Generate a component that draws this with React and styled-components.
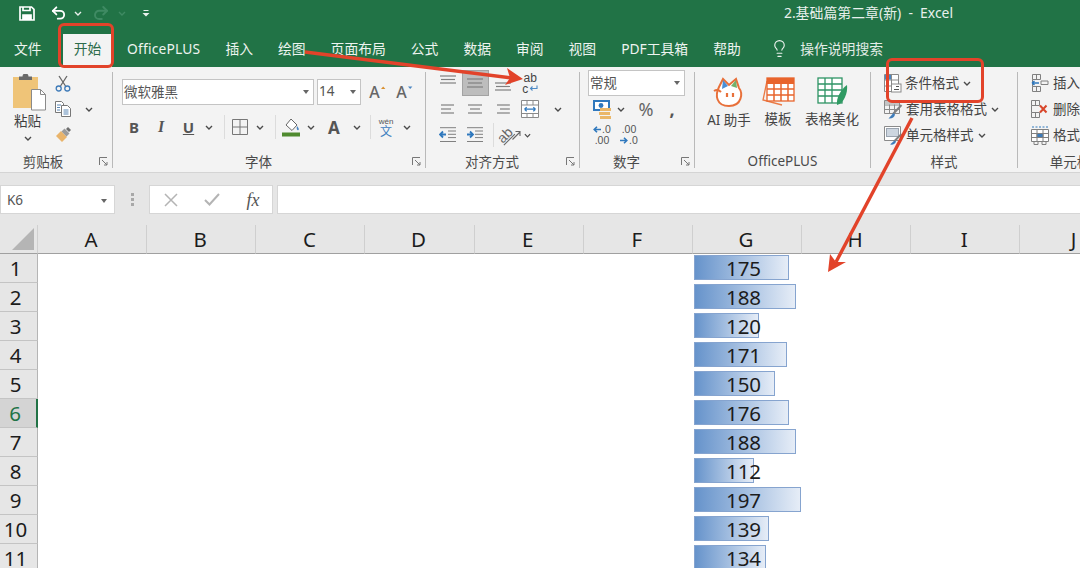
import React from "react";
import styled, { createGlobalStyle } from "styled-components";
import { Undo2, Redo2, Lightbulb } from "lucide-react";

const GREEN = "#217346";
const RED = "#e2432a";
const UI_FONT = `"Noto Sans", "Noto Sans CJK SC", sans-serif`;
const SMALL_FONT = `"Liberation Sans", "Noto Sans CJK SC", sans-serif`;

const GlobalStyle = createGlobalStyle`
	html, body {
		margin: 0;
		padding: 0;
		width: 1080px;
		height: 568px;
		overflow: hidden;
		background: #ffffff;
	}
	* {
		box-sizing: border-box;
	}
`;

const Window = styled.div`
	position: relative;
	width: 1080px;
	height: 568px;
	overflow: hidden;
	font-family: ${UI_FONT};
	background: #ffffff;
`;

const TitleBar = styled.div`
	display: flex;
	align-items: center;
	height: 34px;
	padding-left: 19px;
	background: ${GREEN};
	color: #e8f0ec;
`;

const QuickSlot = styled.span`
	display: flex;
	align-items: center;
	justify-content: center;
	flex: none;
	width: ${(props) => props.$w}px;
	height: 20px;
	margin-top: -8px;
`;

const DocTitle = styled.div`
	margin-left: auto;
	padding-right: 127px;
	margin-top: -11px;
	font-size: 13.9px;
	white-space: pre;
`;

const TabBar = styled.div`
	display: flex;
	align-items: stretch;
	height: 33px;
	padding-left: 1.5px;
	background: ${GREEN};
	color: #eef4f0;
	font-size: 13.8px;
`;

const Tab = styled.div`
	display: flex;
	align-items: center;
	flex: none;
	padding: 0 ${(props) => (props.$active ? 10.7 : 12.5)}px 5px;
	margin: ${(props) => (props.$active ? "0 2.5px 0 9px" : "0")};
	letter-spacing: ${(props) => (props.$latin ? 0.2 : 0)}px;
	background: ${(props) => (props.$active ? "#f3f3f3" : "transparent")};
	color: ${(props) => (props.$active ? "#2c6b4b" : "inherit")};
	white-space: nowrap;
`;

const SearchTab = styled.div`
	display: flex;
	align-items: center;
	gap: 11px;
	margin-left: 17px;
	padding-bottom: 5px;
	color: #e3ece7;
`;

const Ribbon = styled.div`
	display: flex;
	height: 106px;
	background: #f3f3f3;
	border-bottom: 1px solid #d4d4d4;
	color: #444444;
`;

const Group = styled.div`
	display: flex;
	flex-direction: column;
	flex: none;
	width: ${(props) => props.$w}px;
`;

const GroupBody = styled.div`
	flex: 1;
	display: ${(props) => (props.$row ? "flex" : "block")};
	padding-top: 3px;
	min-height: 0;
`;

const GroupFoot = styled.div`
	display: grid;
	grid-template-columns: 1fr ${(props) => props.$launcher || 0}px;
	align-items: center;
	height: 20px;
	margin-bottom: 1px;
	font-size: 13.5px;
	color: #4a4a4a;
`;

const GroupName = styled.span`
	text-align: center;
	white-space: nowrap;
`;

const LauncherSlot = styled.span`
	display: flex;
	justify-content: flex-end;
	padding-right: 4px;
`;

const GroupSep = styled.div`
	flex: none;
	width: 1px;
	margin: 5px 0 4px;
	background: #b9b9b9;
`;

const ToolRow = styled.div`
	display: flex;
	align-items: center;
	height: 26px;
	padding-left: ${(props) => props.$pl || 0}px;
	margin-top: ${(props) => props.$mt || 0}px;
`;

const Slot = styled.span`
	display: flex;
	align-items: center;
	justify-content: center;
	flex: none;
	width: ${(props) => props.$w}px;
	height: 26px;
	margin-left: ${(props) => props.$ml || 0}px;
	${(props) => props.$active && "background: #bdbdbd; border: 1px solid #a3a3a3;"}
`;

const RowSep = styled.span`
	flex: none;
	width: 1px;
	height: 24px;
	margin-left: ${(props) => props.$ml}px;
	background: #dcdcdc;
`;

const Select = styled.div`
	display: flex;
	align-items: center;
	justify-content: space-between;
	flex: none;
	width: ${(props) => props.$w}px;
	height: 26px;
	margin-left: ${(props) => props.$ml}px;
	padding: 0 4px 2px 1px;
	background: #ffffff;
	border: 1px solid #c4c4c4;
	font-size: 13.5px;
	color: #555555;
`;

const Caret = styled.span`
	flex: none;
	margin-top: 2px;
	width: 0;
	height: 0;
	border-left: 3.5px solid transparent;
	border-right: 3.5px solid transparent;
	border-top: 4px solid #666666;
`;

const Glyph = styled.span`
	font-family: ${(props) => props.$font || UI_FONT};
	font-size: ${(props) => props.$size || 15}px;
	font-weight: ${(props) => props.$weight || 700};
	font-style: ${(props) => (props.$italic ? "italic" : "normal")};
	text-decoration: ${(props) => (props.$under ? "underline" : "none")};
	color: ${(props) => props.$color || "#555555"};
	line-height: 1;
`;

const Stack = styled.span`
	display: flex;
	flex-direction: column;
	align-items: ${(props) => props.$align || "center"};
	line-height: 1;
`;

const StackLine = styled.span`
	display: flex;
	align-items: center;
	gap: 1px;
	font-family: ${SMALL_FONT};
	font-size: ${(props) => props.$size || 10.5}px;
	line-height: ${(props) => props.$lh || 11}px;
	color: ${(props) => props.$color || "#555555"};
`;

const TiltedText = styled.span`
	display: block;
	font-family: ${SMALL_FONT};
	font-size: 14px;
	line-height: 14px;
	color: #666666;
	transform: rotate(-45deg);
	text-decoration: underline;
`;

const PasteColumn = styled.div`
	display: flex;
	flex-direction: column;
	align-items: center;
	flex: none;
	width: 54px;
	padding: 4px 0 0 1px;
	font-size: 13.5px;
	line-height: 18px;
`;

const PasteGlyph = styled.span`
	display: flex;
	margin-left: 5px;
`;

const PasteName = styled.span`
	margin-top: 1px;
	color: #3f3f3f;
`;

const PasteChevron = styled.span`
	display: flex;
	margin-top: 6px;
`;

const ClipColumn = styled.div`
	flex: none;
	width: 26px;
	margin-left: -4px;
`;

const BigButton = styled.div`
	display: flex;
	flex-direction: column;
	align-items: center;
	flex: none;
	width: ${(props) => props.$w}px;
	padding: 7px 0 0 ${(props) => props.$pl || 0}px;
	font-size: 13.5px;
	color: #444444;
`;

const BigLabel = styled.span`
	margin-top: 3px;
	line-height: 18px;
	white-space: nowrap;
`;

const StyleRow = styled(ToolRow)`
	padding-left: 13px;
	font-size: 13.5px;
	white-space: nowrap;
`;

const StyleLabel = styled.span`
	margin: -2px 4px 0 ${(props) => props.$ml || 3}px;
`;

const FormulaBar = styled.div`
	display: flex;
	align-items: stretch;
	height: 52px;
	padding: 12px 0 11px;
	background: #e6e6e6;
`;

const NameBox = styled.div`
	display: flex;
	align-items: center;
	justify-content: space-between;
	flex: none;
	width: 115px;
	padding: 0 7px 0 6px;
	background: #ffffff;
	border: 1px solid #d6d6d6;
	font-size: 13.5px;
	color: #555555;
`;

const GripDots = styled.span`
	display: flex;
	flex-direction: column;
	align-items: center;
	justify-content: center;
	gap: 2px;
	flex: none;
	width: 34px;
`;

const GripDot = styled.span`
	width: 3px;
	height: 3px;
	background: #a8a8a8;
`;

const FxBox = styled.div`
	display: grid;
	grid-template-columns: 41px 41px 42px;
	align-items: center;
	justify-items: center;
	flex: none;
	width: 124px;
	background: #ffffff;
	border: 1px solid #d6d6d6;
`;

const FormulaInput = styled.div`
	flex: 1;
	margin-left: 4px;
	background: #ffffff;
	border: 1px solid #d6d6d6;
	border-right: none;
`;

const Sheet = styled.div`
	display: grid;
	grid-template-columns: 38px repeat(10, 109.17px);
	grid-template-rows: 29px;
	grid-auto-rows: 29px;
	font-size: 20.5px;
	color: #1c1c1c;
`;

const Corner = styled.div`
	display: flex;
	align-items: flex-end;
	justify-content: flex-end;
	padding: 0 3px 3px 0;
	background: #e6e6e6;
	border-right: 1px solid #d0d0d0;
	border-bottom: 1px solid #a0a0a0;
`;

const ColumnHead = styled.div`
	display: flex;
	align-items: center;
	justify-content: center;
	padding-right: 2px;
	background: #e6e6e6;
	border-right: 1px solid #cfcfcf;
	border-bottom: 1px solid #a0a0a0;
`;

const RowHead = styled.div`
	display: flex;
	align-items: center;
	justify-content: center;
	padding-right: 6px;
	background: ${(props) => (props.$active ? "#d4d4d4" : "#e6e6e6")};
	border-right: ${(props) => (props.$active ? `2px solid ${GREEN}` : "1px solid #b5b5b5")};
	border-bottom: 1px solid #c4c4c4;
	color: ${(props) => (props.$active ? GREEN : "inherit")};
`;

const Cell = styled.div`
	position: relative;
	display: flex;
	align-items: center;
	justify-content: center;
	padding-right: 8px;
	background: #ffffff;
`;

const DataBar = styled.span`
	position: absolute;
	left: 1px;
	top: 1px;
	height: 25px;
	background: linear-gradient(to right, #6693cb, #e6edf7);
	border: 1px solid #86a4cf;
`;

const CellValue = styled.span`
	position: relative;
	top: -1px;
`;

const HighlightBox = styled.div`
	position: absolute;
	left: ${(props) => props.$x}px;
	top: ${(props) => props.$y}px;
	width: ${(props) => props.$w}px;
	height: ${(props) => props.$h}px;
	border: 3px solid ${RED};
	border-radius: 6px;
`;

const ArrowLayer = styled.svg`
	position: absolute;
	left: 0;
	top: 0;
	pointer-events: none;
`;

const Chevron = ({ color = "#4a4a4a" }) => (
	<svg width="8" height="5" viewBox="0 0 8 5" fill="none" stroke={color} strokeWidth="1.4">
		<path d="M1 1l3 3 3-3" />
	</svg>
);

const Launcher = () => (
	<svg width="9" height="9" viewBox="0 0 9 9" fill="none" stroke="#777" strokeWidth="1">
		<path d="M.5 8V.5H8M3 3l5 5M8 5v3H5" />
	</svg>
);

const SaveIcon = () => (
	<svg width="16" height="15" viewBox="0 0 16 15" fill="none" stroke="#fff" strokeWidth="1.7">
		<path d="M1 1h11.5L15 3.4V14H1z" />
		<path d="M4 1v3.5h7V1" />
		<path d="M4 14V9h8v5" fill="#fff" />
	</svg>
);

const CustomizeIcon = () => (
	<svg width="8" height="8" viewBox="0 0 8 8" fill="#e8f0ec">
		<path d="M1.500 1h5v1h-5zM0.500 4h7L4 7.500z" />
	</svg>
);

const PasteIcon = () => (
	<svg width="36" height="37" viewBox="0 0 36 37">
		<rect x="1" y="3" width="25" height="31" fill="#efc478" />
		<path d="M7 6V2.500h3.500a3 3 0 0 1 6 0H20V6z" fill="#6a6a6a" />
		<path d="M19.500 15.500h9l5 5v15.500h-14z" fill="#fff" stroke="#8a8a8a" />
		<path d="M28.500 15.500v5h5" fill="none" stroke="#8a8a8a" />
	</svg>
);

const ScissorsIcon = () => (
	<svg width="16" height="17" viewBox="0 0 16 17" fill="none">
		<path d="M5.500 11L12 1M10.500 11L4 1" stroke="#666" strokeWidth="1.300" />
		<circle cx="3.700" cy="13.500" r="2.500" stroke="#3d7ab8" strokeWidth="1.300" />
		<circle cx="12.300" cy="13.500" r="2.500" stroke="#3d7ab8" strokeWidth="1.300" />
	</svg>
);

const CopyIcon = () => (
	<svg width="16" height="16" viewBox="0 0 16 16" fill="#fff" stroke="#777">
		<path d="M.5.500h6l2 2v9h-8z" />
		<path d="M6.500 4.500h6l3 3v8h-9z" />
		<path d="M2 4h4M2 6.500h3M2 9h3M8.500 9h5M8.500 11h5M8.500 13h5" stroke="#5b87b5" />
	</svg>
);

const BrushIcon = () => (
	<svg width="16" height="16" viewBox="0 0 16 16">
		<path d="M1 9l5-5 6 6-5 5z" fill="#e9b46b" />
		<path d="M6.500 4.500l3-3 5 5-3 3z" fill="#9b9b9b" />
		<path d="M11 2l2-2 3 3-2 2z" fill="#6f6f6f" />
	</svg>
);

const BorderIcon = () => (
	<svg width="16" height="16" viewBox="0 0 16 16" fill="none" stroke="#777">
		<path d="M.5.500h15v15H.5zM8 .5v15M.5 8h15" />
	</svg>
);

const FillIcon = () => (
	<svg width="19" height="20" viewBox="0 0 19 20">
		<path d="M4 8l5-6 6 6-5 5.500z" fill="#fff" stroke="#666" />
		<path d="M15 9c1.500 2 2.500 3 1.500 4s-2.500-1-1.500-4z" fill="#4b86c2" />
		<rect x="0" y="15.500" width="18" height="4" fill="#4f8a2f" />
	</svg>
);

const FontSizeTick = ({ color, up }) => (
	<svg width="7" height="14" viewBox="0 0 7 14" fill={color}>
		<path d={up ? "M1 4l2.200-2.500L5.400 4z" : "M1 1.500h4.400L3.200 4z"} />
	</svg>
);

// horizontal text lines of the alignment buttons
const LinesIcon = ({ lines }) => (
	<svg width="18" height="18" viewBox="0 0 18 18" fill="none" stroke="#808080" strokeWidth="1.200">
		{lines.map(([x1, x2, y]) => (
			<path key={`${x1}-${y}`} d={`M${x1} ${y}H${x2}`} />
		))}
	</svg>
);

const MergeIcon = () => (
	<svg width="19" height="19" viewBox="0 0 19 19" fill="#fff" stroke="#8a8a8a">
		<path d="M.5.500h17v17H.5z" />
		<path d="M.5 5h17M.5 13.500h17M6 .5V5M12 .5V5M6 13.500V18M12 13.500V18" fill="none" />
		<path d="M3.500 9.200h11M3.500 9.200l2.200-2M3.500 9.200l2.200 2M14.500 9.200l-2.200-2M14.500 9.200l-2.200 2" fill="none" stroke="#2f78bd" strokeWidth="1.200" />
	</svg>
);

const IndentIcon = ({ flip }) => (
	<svg width="18" height="16" viewBox="0 0 18 16" fill="none">
		<path d="M1 .7h16M9 4h8M9 7.300h8M9 10.600h8M1 14.500h16" stroke="#808080" />
		<path d={flip ? "M1 7.500h5M4 4.500l3 3-3 3" : "M7 7.500H2M4 4.500l-3 3 3 3"} stroke="#2f78bd" strokeWidth="1.800" />
	</svg>
);

const WrapReturn = () => (
	<svg width="9" height="7" viewBox="0 0 9 7" fill="none" stroke="#4d8ac6" strokeWidth="1.100">
		<path d="M8 .5v3H1.500M3.500 1.500l-2 2 2 2" />
	</svg>
);

const TiltArrow = () => (
	<svg width="9" height="10" viewBox="0 0 9 10" fill="none" stroke="#666" strokeWidth="1.100">
		<path d="M.5 9.500L8 2M3.500 1.500h4.500v4.500" />
	</svg>
);

const CurrencyIcon = () => (
	<svg width="19" height="19" viewBox="0 0 19 19">
		<rect x="0" y="0" width="17" height="11" fill="#2f78bd" />
		<rect x="2" y="2" width="13" height="7" fill="#fff" />
		<circle cx="8" cy="5.500" r="2.400" fill="#2f78bd" />
		<rect x="7" y="8" width="11" height="3" fill="#eab768" />
		<rect x="6" y="12" width="11" height="3" fill="#eab768" />
		<rect x="7" y="16" width="11" height="3" fill="#eab768" />
	</svg>
);

const SmallArrow = ({ left }) => (
	<svg width="8" height="7" viewBox="0 0 8 7" fill="none" stroke="#2f78bd" strokeWidth="1.600">
		<path d={left ? "M8 3.500H1.500M4 .7L1.200 3.500 4 6.300" : "M0 3.500h6.500M4 .7l2.800 2.800L4 6.300"} />
	</svg>
);

const CatIcon = () => (
	<svg width="32" height="31" viewBox="0 0 32 31" fill="none">
		<path d="M6 10L10 2l6 6 7-6 3 9c4 5 3 18-10 18S2 18 6 10z" fill="#fff" stroke="#e8703a" strokeWidth="2" />
		<path d="M10 3l5 6-6 3z" fill="#4a8fd6" />
		<path d="M23 3l-5 6 6 2z" fill="#74b06a" />
		<path d="M1 14c3-2 5-1 7 1" stroke="#e8703a" strokeWidth="2" />
		<path d="M14 16v4M20 16v4" stroke="#e8703a" strokeWidth="2.200" />
	</svg>
);

const TemplateIcon = () => (
	<svg width="33" height="30" viewBox="0 0 33 30" fill="none">
		<path d="M5 4L1 23l19 5" stroke="#ea7a45" strokeWidth="1.300" />
		<rect x="5" y="1" width="27" height="23" fill="#fff" stroke="#e8642c" strokeWidth="1.300" />
		<rect x="5" y="1" width="27" height="6" fill="#e8642c" />
		<path d="M5 12h27M5 18h27M12 7v17M19 7v17M26 7v17" stroke="#e8642c" strokeWidth="1.500" />
	</svg>
);

const BeautifyIcon = () => (
	<svg width="31" height="30" viewBox="0 0 31 30" fill="none">
		<rect x="1" y="1" width="24" height="25" fill="#fff" stroke="#2f9465" strokeWidth="1.300" />
		<path d="M1 7h24M1 13h24M1 19h24M8 1v25M15 1v25" stroke="#2f9465" strokeWidth="1.300" />
		<path d="M20 28c-1-6 3-15 10-20 1 8-3 18-10 20z" fill="#2f9a62" />
	</svg>
);

const CondFormatIcon = () => (
	<svg width="18" height="19" viewBox="0 0 18 19" fill="#fff" stroke="#8a8a8a">
		<path d="M.5.500h14v17H.5zM.5 6h14M.5 12h14M7.500.5v17" />
		<rect x="1" y="1" width="6" height="4.500" fill="#4b86c2" stroke="none" />
		<rect x="7.500" y="10" width="9.500" height="8" fill="#fff" />
		<path d="M10 15.500h5M12 12.500h3" stroke="#555" />
	</svg>
);

const TableBrushIcon = () => (
	<svg width="19" height="19" viewBox="0 0 19 19" fill="none" stroke="#8a8a8a">
		<path d="M.5.500h15v13H.5zM.5 5h15M.5 9.500h15M5.500.5v13M10.500.5v13" />
		<rect x="1" y="1" width="14" height="3.500" fill="#c5c5c5" stroke="none" />
		<path d="M17.500 5L9 14" stroke="#808080" strokeWidth="2" />
		<path d="M9.500 13l-5 5.500c3 .5 6-1 6.500-4z" fill="#3e7cba" stroke="none" />
	</svg>
);

const CellStyleIcon = () => (
	<svg width="19" height="19" viewBox="0 0 19 19" fill="#fff" stroke="#8a8a8a">
		<path d="M.5.500h16v14H.5z" />
		<rect x="2.500" y="2.500" width="12" height="8" fill="#cdd6e0" stroke="#9aa4b0" />
		<path d="M17.500 8L10 15.500" stroke="#808080" strokeWidth="2" fill="none" />
		<path d="M10.500 14.500L6 18.500c3 .5 5.500-.5 6-3z" fill="#3e7cba" stroke="none" />
	</svg>
);

const InsertCellsIcon = () => (
	<svg width="18" height="18" viewBox="0 0 18 18" fill="none" stroke="#808080">
		<path d="M1.500.5h8v5h-8zM1.500 5.500v7h8M1.500 12.500v5h8v-5M5.500.5v5M5.500 12.500v5" />
		<path d="M10 7h7v3.500h-7z" />
		<path d="M8 9H1M1 9l2.500-2M1 9l2.500 2" stroke="#2f78bd" strokeWidth="1.500" />
	</svg>
);

const DeleteCellsIcon = () => (
	<svg width="18" height="18" viewBox="0 0 18 18" fill="none" stroke="#808080">
		<path d="M.5.500h8v5h-8zM.5 12.500h8v5h-8zM.5 5.500v7M4.500.5v5M4.500 12.500v5" />
		<path d="M9 5.500l6.500 7M15.500 5.500L9 12.500" stroke="#d8472b" strokeWidth="2" />
	</svg>
);

const FormatCellsIcon = () => (
	<svg width="18" height="19" viewBox="0 0 18 19" fill="#fff" stroke="#808080">
		<path d="M.5 3.500h17v12H.5zM6 3.500v12M12 3.500v12M.5 7.500h17M.5 11.500h17" />
		<rect x="6" y="7.500" width="6" height="4" fill="#3e7cba" />
		<path d="M1 1h16" stroke="#2f78bd" strokeDasharray="2 1.500" />
		<path d="M3 15.500v3h4v-3M11 15.500v3h4v-3" fill="none" />
	</svg>
);

const CancelIcon = () => (
	<svg width="14" height="14" viewBox="0 0 14 14" fill="none" stroke="#b4b4b4" strokeWidth="1.500">
		<path d="M1 1l12 12M13 1L1 13" />
	</svg>
);

const ConfirmIcon = () => (
	<svg width="16" height="13" viewBox="0 0 16 13" fill="none" stroke="#b4b4b4" strokeWidth="2">
		<path d="M1 7l4.500 4.500L15 1" />
	</svg>
);

const CornerTriangle = () => (
	<svg width="22" height="22" viewBox="0 0 22 22">
		<path d="M22 0v22H0z" fill="#b5b5b5" />
	</svg>
);

const tabs = ["插入", "绘图", "页面布局", "公式", "数据", "审阅", "视图", "PDF工具箱", "帮助"];
const columns = ["A", "B", "C", "D", "E", "F", "G", "H", "I", "J"];
const values = [175, 188, 120, 171, 150, 176, 188, 112, 197, 139, 134];

// data bar length in px for a cell value
const barWidth = (value) => value * 0.547 - 0.8;

export default function App() {
	return (
		<Window>
			<GlobalStyle />
			<TitleBar>
				<QuickSlot $w={16}><SaveIcon /></QuickSlot>
				<QuickSlot $w={15} />
				<QuickSlot $w={17}><Undo2 size={18} strokeWidth={2.6} color="#ffffff" /></QuickSlot>
				<QuickSlot $w={22}><Chevron color="#e8f0ec" /></QuickSlot>
				<QuickSlot $w={23}><Redo2 size={18} strokeWidth={2.6} color="#3f8a63" /></QuickSlot>
				<QuickSlot $w={20}><Chevron color="#3f8a63" /></QuickSlot>
				<QuickSlot $w={28}><CustomizeIcon /></QuickSlot>
				<DocTitle>2.基础篇第二章(新)  -  Excel</DocTitle>
			</TitleBar>

			<TabBar>
				<Tab>文件</Tab>
				<Tab $active>开始</Tab>
				<Tab $latin>OfficePLUS</Tab>
				{tabs.map((tab) => (
					<Tab key={tab}>{tab}</Tab>
				))}
				<SearchTab>
					<Lightbulb size={19} strokeWidth={1.4} color="#eef4f0" />
					操作说明搜索
				</SearchTab>
			</TabBar>

			<Ribbon>
				<Group $w={112}>
					<GroupBody $row>
						<PasteColumn>
							<PasteGlyph><PasteIcon /></PasteGlyph>
							<PasteName>粘贴</PasteName>
							<PasteChevron><Chevron /></PasteChevron>
						</PasteColumn>
						<ClipColumn>
							<ToolRow><Slot $w={26}><ScissorsIcon /></Slot></ToolRow>
							<ToolRow><Slot $w={26}><CopyIcon /></Slot></ToolRow>
							<ToolRow><Slot $w={26}><BrushIcon /></Slot></ToolRow>
						</ClipColumn>
						<ToolRow $mt={26} $pl={4}><Slot $w={18}><Chevron /></Slot></ToolRow>
					</GroupBody>
					<GroupFoot $launcher={26}>
						<GroupName>剪贴板</GroupName>
						<LauncherSlot><Launcher /></LauncherSlot>
					</GroupFoot>
				</Group>
				<GroupSep />

				<Group $w={312}>
					<GroupBody>
						<ToolRow $mt={9}>
							<Select $w={192} $ml={9}>微软雅黑<Caret /></Select>
							<Select $w={44} $ml={3}>14<Caret /></Select>
							<Slot $w={26} $ml={4}>
								<Glyph $size={16} $weight={500} $color="#666666">A</Glyph>
								<FontSizeTick up color="#d9902f" />
							</Slot>
							<Slot $w={26} $ml={1}>
								<Glyph $size={16} $weight={500} $color="#666666">A</Glyph>
								<FontSizeTick color="#4b86c2" />
							</Slot>
						</ToolRow>
						<ToolRow $mt={9} $pl={8}>
							<Slot $w={26}><Glyph>B</Glyph></Slot>
							<Slot $w={28}><Glyph $font={`"Liberation Serif", serif`} $italic $size={16}>I</Glyph></Slot>
							<Slot $w={27}><Glyph $under>U</Glyph></Slot>
							<Slot $w={14}><Chevron /></Slot>
							<RowSep $ml={8} />
							<Slot $w={30}><BorderIcon /></Slot>
							<Slot $w={10}><Chevron /></Slot>
							<RowSep $ml={10} />
							<Slot $w={30}><FillIcon /></Slot>
							<Slot $w={10}><Chevron /></Slot>
							<Slot $w={36}><Glyph $size={17}>A</Glyph></Slot>
							<Slot $w={10}><Chevron /></Slot>
							<RowSep $ml={8} />
							<Slot $w={30}>
								<Stack>
									<StackLine $size={8} $lh={9}>wén</StackLine>
									<StackLine $size={12} $lh={12} $color="#3f80bf">文</StackLine>
								</Stack>
							</Slot>
							<Slot $w={12}><Chevron /></Slot>
						</ToolRow>
					</GroupBody>
					<GroupFoot $launcher={21}>
						<GroupName>字体</GroupName>
						<LauncherSlot><Launcher /></LauncherSlot>
					</GroupFoot>
				</Group>
				<GroupSep />

				<Group $w={153}>
					<GroupBody>
						<ToolRow $pl={8}>
							<Slot $w={27.5}><LinesIcon lines={[[1, 17, 2], [2, 16, 5.5], [1, 17, 9]]} /></Slot>
							<Slot $w={27.5} $active><LinesIcon lines={[[1, 17, 5], [2, 16, 9], [1, 17, 13]]} /></Slot>
							<Slot $w={27.5}><LinesIcon lines={[[1, 17, 9], [2, 16, 12.5], [1, 17, 16]]} /></Slot>
							<Slot $w={27.5}>
								<Stack>
									<StackLine $size={12} $lh={11} $color="#444444">ab</StackLine>
									<StackLine $size={12} $lh={10} $color="#444444">c<WrapReturn /></StackLine>
								</Stack>
							</Slot>
						</ToolRow>
						<ToolRow $pl={8}>
							<Slot $w={27.5}><LinesIcon lines={[[2, 15, 5], [2, 12, 9], [2, 15, 13]]} /></Slot>
							<Slot $w={27.5}><LinesIcon lines={[[2, 16, 5], [4, 14, 9], [2, 16, 13]]} /></Slot>
							<Slot $w={27.5}><LinesIcon lines={[[3, 16, 5], [6, 16, 9], [3, 16, 13]]} /></Slot>
							<Slot $w={27.5}><MergeIcon /></Slot>
							<Slot $w={27.5}><Chevron /></Slot>
						</ToolRow>
						<ToolRow $pl={8}>
							<Slot $w={27.5}><IndentIcon /></Slot>
							<Slot $w={27.5}><IndentIcon flip /></Slot>
							<RowSep $ml={4} />
							<Slot $w={30}>
								<TiltedText>ab</TiltedText>
								<TiltArrow />
							</Slot>
							<Slot $w={7}><Chevron /></Slot>
						</ToolRow>
					</GroupBody>
					<GroupFoot $launcher={21}>
						<GroupName>对齐方式</GroupName>
						<LauncherSlot><Launcher /></LauncherSlot>
					</GroupFoot>
				</Group>
				<GroupSep />

				<Group $w={114}>
					<GroupBody>
						<ToolRow>
							<Select $w={97} $ml={8}>常规<Caret /></Select>
						</ToolRow>
						<ToolRow $pl={10}>
							<Slot $w={24}><CurrencyIcon /></Slot>
							<Slot $w={14}><Chevron /></Slot>
							<Slot $w={36}><Glyph $size={18} $weight={400} $color="#666666">%</Glyph></Slot>
							<Slot $w={16}><Glyph $size={18} $color="#555555">,</Glyph></Slot>
						</ToolRow>
						<ToolRow $pl={10}>
							<Slot $w={24}>
								<Stack>
									<StackLine><SmallArrow left />.0</StackLine>
									<StackLine>.00</StackLine>
								</Stack>
							</Slot>
							<Slot $w={30}>
								<Stack>
									<StackLine>.00</StackLine>
									<StackLine><SmallArrow />.0</StackLine>
								</Stack>
							</Slot>
						</ToolRow>
					</GroupBody>
					<GroupFoot $launcher={21}>
						<GroupName>数字</GroupName>
						<LauncherSlot><Launcher /></LauncherSlot>
					</GroupFoot>
				</Group>
				<GroupSep />

				<Group $w={175}>
					<GroupBody $row>
						<BigButton $w={65} $pl={3}>
							<CatIcon />
							<BigLabel>AI 助手</BigLabel>
						</BigButton>
						<BigButton $w={36}>
							<TemplateIcon />
							<BigLabel>模板</BigLabel>
						</BigButton>
						<BigButton $w={72}>
							<BeautifyIcon />
							<BigLabel>表格美化</BigLabel>
						</BigButton>
					</GroupBody>
					<GroupFoot>
						<GroupName>OfficePLUS</GroupName>
					</GroupFoot>
				</Group>
				<GroupSep />

				<Group $w={146}>
					<GroupBody>
						<StyleRow><CondFormatIcon /><StyleLabel>条件格式</StyleLabel><Chevron /></StyleRow>
						<StyleRow><TableBrushIcon /><StyleLabel>套用表格格式</StyleLabel><Chevron /></StyleRow>
						<StyleRow><CellStyleIcon /><StyleLabel>单元格样式</StyleLabel><Chevron /></StyleRow>
					</GroupBody>
					<GroupFoot>
						<GroupName>样式</GroupName>
					</GroupFoot>
				</Group>
				<GroupSep />

				<Group $w={104}>
					<GroupBody>
						<StyleRow><InsertCellsIcon /><StyleLabel $ml={4}>插入</StyleLabel></StyleRow>
						<StyleRow><DeleteCellsIcon /><StyleLabel $ml={4}>删除</StyleLabel></StyleRow>
						<StyleRow><FormatCellsIcon /><StyleLabel $ml={4}>格式</StyleLabel></StyleRow>
					</GroupBody>
					<GroupFoot>
						<GroupName>单元格</GroupName>
					</GroupFoot>
				</Group>
			</Ribbon>

			<FormulaBar>
				<NameBox>K6<Caret /></NameBox>
				<GripDots>
					<GripDot />
					<GripDot />
					<GripDot />
				</GripDots>
				<FxBox>
					<CancelIcon />
					<ConfirmIcon />
					<Glyph $font={`"Liberation Serif", serif`} $italic $size={18} $weight={400}>fx</Glyph>
				</FxBox>
				<FormulaInput />
			</FormulaBar>

			<Sheet>
				<Corner><CornerTriangle /></Corner>
				{columns.map((col) => (
					<ColumnHead key={col}>{col}</ColumnHead>
				))}
				{values.map((value, idx) => (
					<React.Fragment key={idx}>
						<RowHead $active={idx === 5}>{idx + 1}</RowHead>
						{columns.map((col) => (
							col === "G" ? (
								<Cell key={col}>
									<DataBar style={{ width: barWidth(value) }} />
									<CellValue>{value}</CellValue>
								</Cell>
							) : (
								<Cell key={col} />
							)
						))}
					</React.Fragment>
				))}
			</Sheet>

			<HighlightBox $x={58} $y={23} $w={56} $h={45} />
			<HighlightBox $x={886} $y={58} $w={98} $h={45} />
			<ArrowLayer width="1080" height="568" viewBox="0 0 1080 568">
				<path d="M305 52L512 78" stroke={RED} strokeWidth="3.4" fill="none" />
				<path d="M523 79L507 68L510 78L505 85z" fill={RED} />
				<path d="M912 118L836 262" stroke={RED} strokeWidth="3.4" fill="none" />
				<path d="M828 272L830 254L836 262L846 262z" fill={RED} />
			</ArrowLayer>
		</Window>
	);
}
